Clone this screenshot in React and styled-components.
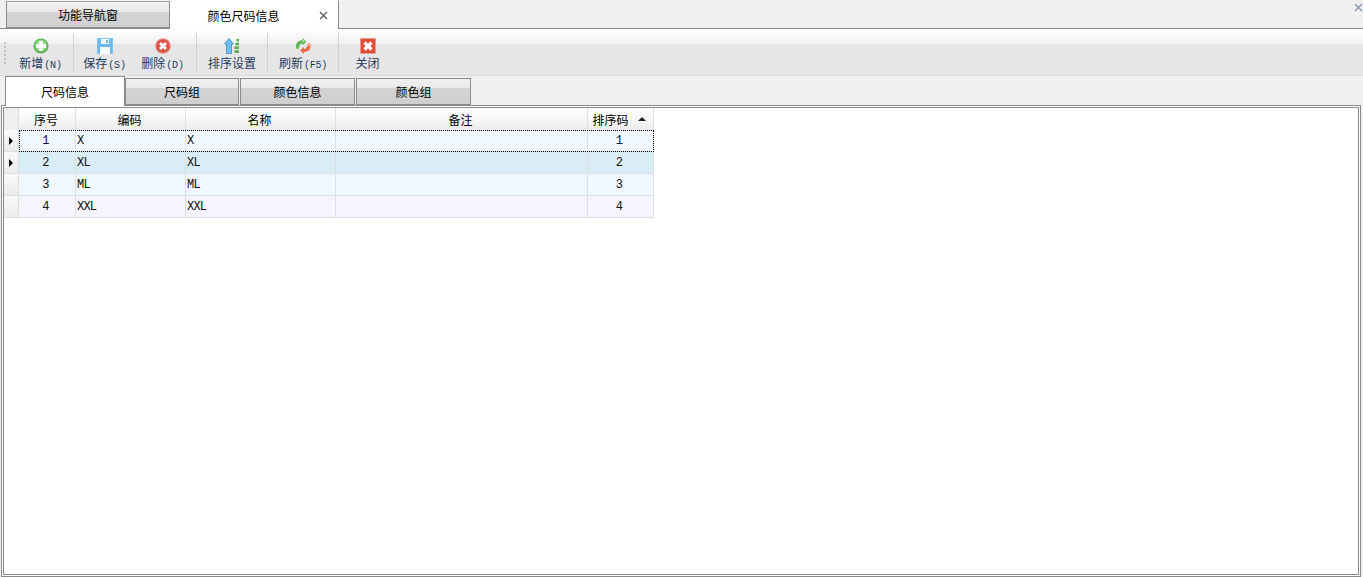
import styled, { createGlobalStyle } from "styled-components";

const GlobalStyle = createGlobalStyle`
  html, body {
    margin: 0;
    padding: 0;
    background: #f0f0f0;
    overflow: hidden;
  }
  body {
    font-family: "Noto Sans CJK SC", "Liberation Sans", sans-serif;
    font-size: 12px;
    color: #000;
  }
`;

const toolButtons = [
  { label: "新增", key: "(N)", width: 66, sep: true, icon: <AddIcon /> },
  { label: "保存", key: "(S)", width: 60, padLeft: 2, icon: <SaveIcon /> },
  { label: "删除", key: "(D)", width: 63, padRight: 5, sep: true, icon: <DeleteIcon /> },
  { label: "排序设置", width: 71, sep: true, icon: <SortIcon /> },
  { label: "刷新", key: "(F5)", width: 71, sep: true, icon: <RefreshIcon /> },
  { label: "关闭", width: 58, icon: <CloseIcon /> },
];

const subTabs = [
  { label: "尺码信息", width: 120, active: true },
  { label: "尺码组", width: 114 },
  { label: "颜色信息", width: 115 },
  { label: "颜色组", width: 115 },
];

const columns = [
  { title: "序号", width: 57 },
  { title: "编码", width: 110 },
  { title: "名称", width: 150 },
  { title: "备注", width: 252 },
  { title: "排序码", width: 66, sorted: true },
];

const rows = [
  { no: 1, code: "X", name: "X", order: 1, bg: "#f0f7fe", marker: true, focused: true },
  { no: 2, code: "XL", name: "XL", order: 2, bg: "#daecf6", marker: true },
  { no: 3, code: "ML", name: "ML", order: 3, bg: "#f0f7fe" },
  { no: 4, code: "XXL", name: "XXL", order: 4, bg: "#f6f4fe" },
];

export default function App() {
  return (
    <Page>
      <GlobalStyle />
      <DocTabs>
        <DocTab $width={164}>功能导航窗</DocTab>
        <DocTab $width={169} $active>
          颜色尺码信息
          <TabClose viewBox="0 0 9 9">
            <path d="M1 1l7 7M8 1l-7 7" stroke="#555" strokeWidth="1.2" fill="none" />
          </TabClose>
        </DocTab>
        <WindowClose viewBox="0 0 9 9">
          <path d="M1 1l7 7M8 1l-7 7" stroke="#8493ad" strokeWidth="1.2" fill="none" />
        </WindowClose>
      </DocTabs>

      <Toolbar>
        <Grip />
        {toolButtons.map((b) => (
          <ToolButton
            key={b.label}
            $width={b.width}
            $sep={b.sep}
            $padLeft={b.padLeft}
            $padRight={b.padRight}
          >
            <IconSlot>{b.icon}</IconSlot>
            <ToolLabel>
              {b.label}
              {b.key && <HotKey>{b.key}</HotKey>}
            </ToolLabel>
          </ToolButton>
        ))}
      </Toolbar>

      <SubTabs>
        {subTabs.map((t) => (
          <SubTab key={t.label} $width={t.width} $active={t.active}>
            {t.label}
          </SubTab>
        ))}
      </SubTabs>

      <Panel>
        <PanelInner>
          <Grid>
            <HeaderRow>
              <RowHead $header />
              {columns.map((c) => (
                <HeaderCell key={c.title} $width={c.width} $sorted={c.sorted}>
                  {c.title}
                  {c.sorted && <SortArrow />}
                </HeaderCell>
              ))}
            </HeaderRow>
            {rows.map((r) => (
              <Row key={r.no} $bg={r.bg}>
                <RowHead>{r.marker && <RowMarker />}</RowHead>
                <Cell $width={57} $center>{r.no}</Cell>
                <Cell $width={110}>{r.code}</Cell>
                <Cell $width={150}>{r.name}</Cell>
                <Cell $width={252} />
                <Cell $width={66} $center>{r.order}</Cell>
                {r.focused && <FocusBox />}
              </Row>
            ))}
          </Grid>
        </PanelInner>
      </Panel>
    </Page>
  );
}

function AddIcon() {
  return (
    <svg width="16" height="16" viewBox="0 0 16 16">
      <circle cx="8" cy="8" r="7.6" fill="#5fb55a" />
      <circle cx="8" cy="7.500" r="5.800" fill="#95d98b" />
      <path d="M6.200 3h3.600v3.200H13v3.600H9.800V13H6.200V9.800H3V6.200h3.200z" fill="#fff" />
    </svg>
  );
}

function SaveIcon() {
  return (
    <svg width="16" height="16" viewBox="0 0 16 16">
      <rect width="16" height="16" fill="#82c6f4" />
      <rect x="1" y="1" width="14" height="14" fill="#6db8ee" />
      <rect x="4" y="1" width="8" height="5" fill="#eef7fd" />
      <rect x="9" y="2" width="2" height="3" fill="#6db8ee" />
      <rect x="3" y="9" width="10" height="7" fill="#f7fbfe" />
    </svg>
  );
}

function DeleteIcon() {
  return (
    <svg width="16" height="16" viewBox="0 0 16 16">
      <circle cx="8" cy="8" r="7.800" fill="#e8897f" />
      <circle cx="8" cy="8" r="6.600" fill="#df5146" />
      <path d="M5 5l6 6M11 5l-6 6" stroke="#fff" strokeWidth="2.800" fill="none" />
    </svg>
  );
}

function SortIcon() {
  return (
    <svg width="16" height="16" viewBox="0 0 16 16">
      <path d="M5 0.500l4.500 5.500H7.500v9.500h-5V6H.5z" fill="#6dbdf2" stroke="#3d8ccc" strokeWidth="0.800" />
      <path d="M12.500 1H15v2.500h-2.500zM11.500 4.800H15v2.500h-3.500zM10.500 8.500H15V11h-4.500zM10.500 12.300H15v2.700h-4.500z" fill="#57ad49" />
    </svg>
  );
}

function RefreshIcon() {
  return (
    <svg width="16" height="16" viewBox="0 0 16 16">
      <path d="M1 9C0.500 5 3.500 2 7.500 2.200V0l4 3.700-4 3.800V5.500C5.500 5.300 4 7 4.200 10L2 11.500z" fill="#62b455" />
      <path d="M7.500 1l3 2.700-3 .5z" fill="#b4e2a9" />
      <path d="M15.500 7c.5 4-2 7-6.500 7v2l-4-3.500L9 9v2c2.200 0 3.500-1.800 3-4.500l2-1.500z" fill="#ea6a42" />
      <path d="M12 6l2.500-1.500L15 8l-2.500.500z" fill="#f3ad95" />
    </svg>
  );
}

function CloseIcon() {
  return (
    <svg width="16" height="16" viewBox="0 0 16 16">
      <rect width="16" height="16" fill="#e3a08f" />
      <rect x="1" y="1" width="14" height="14" fill="#e14c39" />
      <path d="M4.500 4.500l7 7M11.500 4.500l-7 7" stroke="#fff" strokeWidth="3.200" fill="none" />
    </svg>
  );
}

const Page = styled.div`
  width: 1363px;
  height: 577px;
  display: flex;
  flex-direction: column;
  background: #f0f0f0;
`;

const DocTabs = styled.div`
  position: relative;
  height: 28px;
  flex: none;
  display: flex;
  align-items: flex-end;
  padding-left: 6px;
  background: #f0f0f0;
  border-bottom: 1px solid #8a8a92;
`;

const DocTab = styled.div`
  position: relative;
  box-sizing: border-box;
  width: ${(p) => p.$width}px;
  height: ${(p) => (p.$active ? 29 : 27)}px;
  margin-bottom: ${(p) => (p.$active ? -1 : 0)}px;
  display: flex;
  align-items: center;
  justify-content: center;
  padding-right: ${(p) => (p.$active ? 21 : 0)}px;
  border: 1px solid #8a8a92;
  border-top-color: ${(p) => (p.$active ? "#fff" : "#a5a5a5")};
  border-bottom: ${(p) => (p.$active ? "none" : "1px solid #8a8a92")};
  border-left: ${(p) => (p.$active ? "none" : "1px solid #8a8a92")};
  background: ${(p) =>
    p.$active
      ? "#fff"
      : "linear-gradient(#f0f0f0 0, #e9e9e9 40%, #d4d4d4 42%, #cfcfcf 100%)"};
`;

const TabClose = styled.svg`
  position: absolute;
  right: 10px;
  top: 10px;
  width: 9px;
  height: 9px;
`;

const WindowClose = styled.svg`
  position: absolute;
  right: 0;
  top: 3px;
  width: 9px;
  height: 9px;
`;

const Toolbar = styled.div`
  height: 46px;
  flex: none;
  display: flex;
  align-items: stretch;
  padding-right: 2px;
  background: linear-gradient(#fff 0, #f0f0f0 32%, #e6e6e6 34%, #e6e6e6 100%);
  border-bottom: 1px solid #dcdcdc;
`;

const Grip = styled.div`
  width: 8px;
  margin: 13px 0 11px;
  background: repeating-linear-gradient(
    #c4c4c4 0,
    #c4c4c4 2px,
    transparent 2px,
    transparent 4px
  ) 4px 0 / 2px 100% no-repeat;
`;

const ToolButton = styled.div`
  box-sizing: border-box;
  width: ${(p) => p.$width}px;
  display: flex;
  flex-direction: column;
  align-items: center;
  margin: 4px 0 3px;
  padding: 5px ${(p) => p.$padRight || 0}px 0 ${(p) => p.$padLeft || 0}px;
  border-right: 1px solid ${(p) => (p.$sep ? "#d2d2d2" : "transparent")};
`;

const IconSlot = styled.div`
  height: 16px;
  display: flex;
`;

const ToolLabel = styled.div`
  margin-top: 1px;
  color: #1c3a5e;
  line-height: 16px;
  white-space: nowrap;
`;

const HotKey = styled.span`
  margin-left: 1px;
  font-family: "Liberation Mono", monospace;
  font-size: 10px;
  letter-spacing: -0.2px;
`;

const SubTabs = styled.div`
  height: 29px;
  flex: none;
  display: flex;
  align-items: flex-end;
  padding-left: 5px;
  position: relative;
  z-index: 1;
`;

const SubTab = styled.div`
  box-sizing: border-box;
  width: ${(p) => p.$width}px;
  height: ${(p) => (p.$active ? 30 : 27)}px;
  margin-bottom: ${(p) => (p.$active ? -1 : 0)}px;
  margin-right: ${(p) => (p.$active ? 0 : 1)}px;
  display: flex;
  align-items: center;
  justify-content: center;
  border: 1px solid #8a8a92;
  border-bottom: ${(p) => (p.$active ? "none" : "1px solid #8a8a92")};
  background: ${(p) =>
    p.$active
      ? "#fff"
      : "linear-gradient(#f0f0f0 0, #e9e9e9 36%, #d4d4d4 38%, #cfcfcf 100%)"};
`;

const Panel = styled.div`
  flex: 1;
  margin: 0 2px 0 1px;
  border: 1px solid #8a8a8a;
  padding: 1px;
  background: #fff;
  display: flex;
  min-height: 0;
`;

const PanelInner = styled.div`
  flex: 1;
  border: 1px solid #8a8a8a;
  background: #fff;
`;

const Grid = styled.div`
  display: flex;
  flex-direction: column;
  width: max-content;
  font-family: "Liberation Mono", "Noto Sans CJK SC", monospace;
  font-size: 12px;
  letter-spacing: -0.8px;
`;

const HeaderRow = styled.div`
  display: flex;
  height: 22px;
  font-family: "Noto Sans CJK SC", sans-serif;
  letter-spacing: 0;
  background: linear-gradient(#fff 0, #f7f7f7 50%, #ececec 100%);
`;

const Row = styled.div`
  position: relative;
  display: flex;
  height: 22px;
  background: ${(p) => p.$bg};
`;

const RowHead = styled.div`
  box-sizing: border-box;
  width: 15px;
  height: 100%;
  flex: none;
  display: flex;
  align-items: center;
  justify-content: center;
  border-right: 1px solid #dcdfe4;
  border-bottom: ${(p) => (p.$header ? "none" : "1px solid #dcdfe4")};
  background: ${(p) => (p.$header ? "#efefef" : "linear-gradient(#fafafa, #ebebeb)")};
`;

const RowMarker = styled.div`
  width: 0;
  height: 0;
  border-left: 4px solid #000;
  border-top: 4px solid transparent;
  border-bottom: 4px solid transparent;
`;

const HeaderCell = styled.div`
  position: relative;
  box-sizing: border-box;
  width: ${(p) => p.$width}px;
  display: flex;
  align-items: center;
  justify-content: center;
  padding-right: ${(p) => (p.$sorted ? 20 : 2)}px;
  border-right: 1px solid #e2e2e2;
`;

const SortArrow = styled.span`
  position: absolute;
  right: 7px;
  top: 9px;
  border-left: 4px solid transparent;
  border-right: 4px solid transparent;
  border-bottom: 4px solid #222;
`;

const Cell = styled.div`
  box-sizing: border-box;
  width: ${(p) => p.$width}px;
  height: 100%;
  display: flex;
  align-items: center;
  justify-content: ${(p) => (p.$center ? "center" : "flex-start")};
  padding: 0 ${(p) => (p.$center ? 3 : 0)}px 0 ${(p) => (p.$center ? 0 : 1)}px;
  border-right: 1px solid #dcdfe4;
  border-bottom: 1px solid #dcdfe4;
  color: #111;
`;

const FocusBox = styled.div`
  position: absolute;
  left: 15px;
  right: 0;
  top: 0;
  bottom: 0;
  border: 1px dotted #000;
  pointer-events: none;
`;
